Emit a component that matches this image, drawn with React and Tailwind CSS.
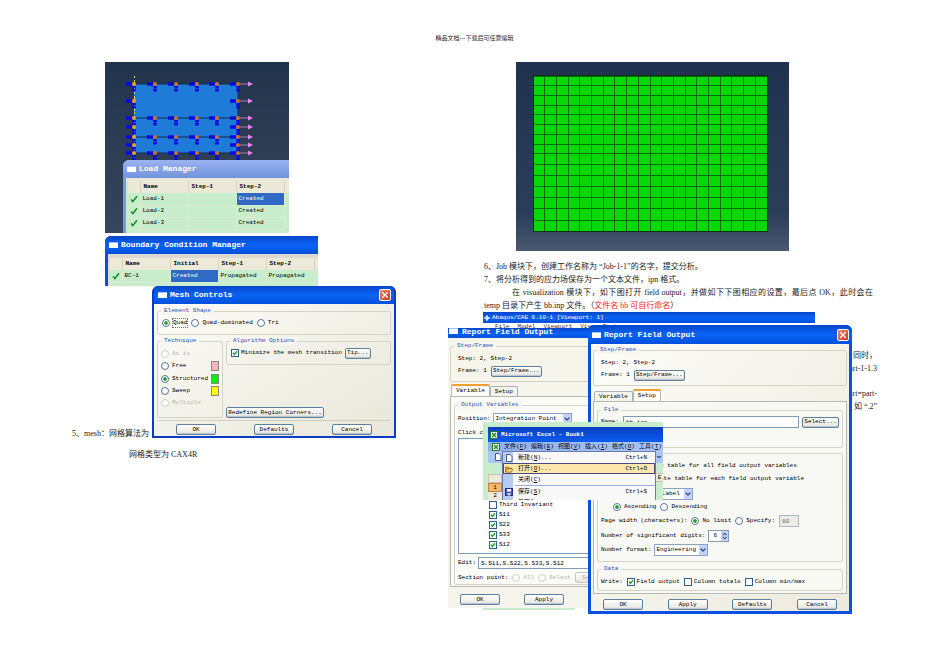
import { ChevronDown, X } from 'lucide-react';

const nodeColumns = [29, 50, 71, 92, 112, 133];
const nodeRows = [
  { y: 22, full: true },
  { y: 39, full: false },
  { y: 56, full: true },
  { y: 65, full: false },
  { y: 75, full: true },
  { y: 83, full: false },
  { y: 91, full: true },
];

const meshRows = [14, 23, 33, 43, 52, 62, 72, 82, 91, 102, 113, 124, 135, 146, 158, 169];

const XpButton = ({ children, className = 'w-10', disabled = false }) => (
  <button
    type="button"
    disabled={disabled}
    className={`h-[11px] shrink-0 whitespace-nowrap rounded-xs border border-[#5f7f9f] bg-linear-to-b from-white to-[#e6e5dc] text-center shadow-[inset_0_-1px_1px_#b9c3d2] disabled:border-[#c9c7ba] disabled:text-[#aca899] disabled:shadow-none ${className}`}
  >
    {children}
  </button>
);

const Radio = ({ label, name, checked = false, disabled = false, focused = false }) => (
  <label className={`flex items-center gap-[3px] whitespace-nowrap ${disabled ? 'text-[#b5b3a6]' : ''}`}>
    <input
      type="radio"
      name={name}
      defaultChecked={checked}
      disabled={disabled}
      className="size-2 shrink-0 appearance-none rounded-full border border-[#55779a] bg-white checked:bg-[radial-gradient(circle,#21a121_0_35%,#ffffff_45%)] disabled:border-[#d0cec2]"
    />
    <span className={focused ? 'outline outline-dotted outline-[#777777]' : ''}>{label}</span>
  </label>
);

const Check = ({ label, checked = false }) => (
  <label className="flex items-center gap-[2px] whitespace-nowrap">
    <span className="grid size-2 shrink-0">
      <input
        type="checkbox"
        defaultChecked={checked}
        className="peer col-start-1 row-start-1 size-2 appearance-none border border-[#2f5f8f] bg-white"
      />
      <svg
        viewBox="0 0 8 8"
        className="pointer-events-none col-start-1 row-start-1 hidden size-2 fill-none stroke-[#21a121] peer-checked:block"
      >
        <path d="M2 3.6 3.4 5.4 6 2.2" strokeWidth="1.4" />
      </svg>
    </span>
    {label}
  </label>
);

const Dropdown = ({ value, label, className }) => (
  <span className={`grid h-3 shrink-0 ${className}`}>
    <select
      aria-label={label}
      className="col-start-1 row-start-1 w-full appearance-none border border-[#8aa5c4] bg-white pl-px"
    >
      <option>{value}</option>
    </select>
    <span className="pointer-events-none col-start-1 row-start-1 m-px flex w-2 items-center justify-center self-stretch justify-self-end bg-[#c3d3fd]">
      <ChevronDown className="size-2 text-[#33508a]" strokeWidth={4} />
    </span>
  </span>
);

const Group = ({ title, className = '', children }) => (
  <fieldset className="relative min-w-0">
    {title && (
      <legend className="absolute -top-1 left-1 h-2 bg-[#f8f7ef] px-[3px] leading-2 text-[#1d4fc0]">
        {title}
      </legend>
    )}
    <div className={`rounded-xs border border-[#d5d3c4] ${className}`}>{children}</div>
  </fieldset>
);

const WindowIcon = () => <span className="h-[6px] w-[9px] shrink-0 border-t border-[#9fc4f5] bg-white" />;

const TitleBar = ({ title, closable = false, className }) => (
  <div className={`flex shrink-0 items-center gap-[3px] pl-1 pr-[3px] text-[8px] font-bold text-white ${className}`}>
    <WindowIcon />
    <h2 className="flex-1 whitespace-nowrap">{title}</h2>
    {closable && (
      <button
        type="button"
        aria-label="Close"
        className="flex size-3 items-center justify-center rounded-xs border border-white bg-linear-to-br from-[#f0866a] to-[#c8321a]"
      >
        <X className="size-[10px]" strokeWidth={3} />
      </button>
    )}
  </div>
);

const blueTitle = 'bg-linear-to-b from-[#0846c8] via-[#0a63f5] to-[#0450dc]';

const CheckMark = () => (
  <svg viewBox="0 0 8 8" className="mx-auto size-2 fill-none stroke-[#0f8a1e]">
    <path d="M1 4.4 2.8 6.6 7 1.2" strokeWidth="1.5" />
  </svg>
);

const ManagerTable = ({ columns, rows, selected }) => (
  <table className="w-full table-fixed border-collapse bg-[#c7edcc] text-left">
    <thead>
      <tr className="h-3 bg-[#ece9d8]">
        <th className="w-3 border-r border-[#d8d4c2]" />
        {columns.map((column) => (
          <th key={column} className="w-12 border-r border-[#d8d4c2] pl-[3px] font-bold">
            {column}
          </th>
        ))}
        <th />
      </tr>
    </thead>
    <tbody>
      {rows.map((row, r) => (
        <tr key={row[0]} className="h-3">
          <td className="border-b border-r border-[#d9ecd6]">
            <CheckMark />
          </td>
          {row.map((cell, c) => (
            <td
              key={columns[c]}
              className={`border-b border-r border-[#d9ecd6] pl-[2px] ${
                r === 0 && columns[c] === selected ? 'bg-[#316ac5] text-white' : ''
              }`}
            >
              {cell}
            </td>
          ))}
          <td />
        </tr>
      ))}
    </tbody>
  </table>
);

const ModelDrawing = () => (
  <svg viewBox="0 0 184 98" className="block h-[98px] w-full">
    <rect x="29" y="22" width="104" height="69" fill="#1f7bd8" />
    <path d="M29 22H133M29 56H133M29 75H133M29 91H133M133 22V91" stroke="#0d2c55" fill="none" />
    <path d="M29.5 14V98" stroke="#d8d860" strokeDasharray="2 2" />
    <path d="M29.5 24V98" stroke="#ffffff" strokeDasharray="1 5" />
    {nodeRows.map(({ y, full }) =>
      nodeColumns
        .filter((x) => full || x === 29 || x === 133)
        .map((x) => (
          <g key={`${x}-${y}`}>
            <path d={`M${x - 8} ${y}H${x - 2}`} stroke="#0808e0" strokeWidth="3.500" />
            <path d={`M${x} ${y + 2}V${y + 8}`} stroke="#0808e0" strokeWidth="3.500" strokeDasharray="2.500 0.5" />
            <circle cx={x} cy={y} r="2" fill={x === 29 ? '#f0a030' : '#d07030'} />
          </g>
        ))
    )}
    {nodeRows.map(({ y }) => (
      <g key={y}>
        <path d={`M135 ${y}H144`} stroke="#a878b8" />
        <path d={`M143 ${y - 2.5}L148 ${y}L143 ${y + 2.5}Z`} fill="#ee82ee" />
      </g>
    ))}
  </svg>
);

const MeshDrawing = () => (
  <svg
    viewBox="0 0 273 189"
    className="block h-[189px] w-[273px] bg-linear-to-b from-[#20324f] via-[#2c3d58] via-80% to-[#4a5970]"
  >
    <rect x="17.5" y="14" width="234" height="156" fill="#08d808" />
    {meshRows.map((y) => (
      <path key={y} d={`M17 ${y + 0.5}H252`} stroke="#056a05" />
    ))}
    {Array.from({ length: 21 }, (_, i) => (
      <path key={i} d={`M${Math.round(17.5 + i * 11.7) - 0.5} 14V170`} stroke="#056a05" />
    ))}
    <rect x="17.5" y="13.5" width="234" height="156" fill="none" stroke="#04340c" />
  </svg>
);

const LoadManager = () => (
  <figure className="w-[184px] overflow-hidden bg-linear-to-b from-[#22344c] to-[#36465c]">
    <ModelDrawing />
    <section className="ml-[18px] flex h-[73px] flex-col rounded-tl-md bg-[#7b97e0]">
      <TitleBar title="Load Manager" className="h-[18px] rounded-tl-md bg-linear-to-b from-[#9ab4f0] to-[#7392de]" />
      <div className="ml-[3px] flex-1 border-t-3 border-[#e9e7dc] bg-[#c7edcc] pl-[2px]">
        <ManagerTable
          columns={['Name', 'Step-1', 'Step-2']}
          rows={[
            ['Load-1', '', 'Created'],
            ['Load-2', '', 'Created'],
            ['Load-3', '', 'Created'],
          ]}
          selected="Step-2"
        />
      </div>
    </section>
  </figure>
);

const BoundaryManager = () => (
  <figure className="flex h-[50px] w-[213px] flex-col rounded-tl-md bg-[#0a50dc]">
    <TitleBar title="Boundary Condition Manager" className={`h-[18px] rounded-tl-md ${blueTitle}`} />
    <div className="ml-[3px] flex-1 border-l border-t-4 border-[#dcdad0] bg-[#c7edcc] pl-px">
      <ManagerTable
        columns={['Name', 'Initial', 'Step-1', 'Step-2']}
        rows={[['BC-1', 'Created', 'Propagated', 'Propagated']]}
        selected="Initial"
      />
    </div>
  </figure>
);

const techniques = [
  { label: 'As is', disabled: true },
  { label: 'Free', color: 'bg-[#ffb3c1]' },
  { label: 'Structured', color: 'bg-[#00ee10]', checked: true },
  { label: 'Sweep', color: 'bg-[#ffff00]' },
  { label: 'Multiple', disabled: true },
];

const MeshControls = () => (
  <section className="flex h-[152px] w-[244px] shrink-0 flex-col rounded-t-md border-2 border-t-0 border-[#0a3cc8] bg-linear-to-br from-[#fdfdfa] to-[#e9e7d9]">
    <TitleBar title="Mesh Controls" closable className={`h-[18px] rounded-t-sm ${blueTitle}`} />
    <div className="flex flex-1 flex-col px-[3px] pt-[7px]">
      <Group title="Element Shape" className="flex h-6 items-center gap-1 px-1">
        <Radio name="shape" label="Quad" checked focused />
        <Radio name="shape" label="Quad-dominated" />
        <Radio name="shape" label="Tri" />
      </Group>
      <div className="mt-[6px] flex items-start gap-[3px]">
        <Group title="Technique" className="flex h-[77px] w-[66px] flex-col justify-between px-[3px] pb-[9px] pt-[7px]">
          {techniques.map((t) => (
            <div key={t.label} className="flex h-[10px] items-center justify-between">
              <Radio name="technique" label={t.label} checked={t.checked} disabled={t.disabled} />
              {t.color && <span className={`h-[10px] w-2 shrink-0 border border-[#8a8a80] ${t.color}`} />}
            </div>
          ))}
        </Group>
        <div className="flex h-[77px] flex-1 flex-col justify-between">
          <Group title="Algorithm Options" className="flex h-6 items-center gap-[3px] px-1">
            <Check label="Minimize the mesh transition" checked />
            <XpButton className="w-[26px]">Tip...</XpButton>
          </Group>
          <XpButton className="w-[98px]">Redefine Region Corners...</XpButton>
        </div>
      </div>
      <div className="mt-[2px] flex justify-around border-t border-[#cfcdbf] pt-[3px]">
        <XpButton>OK</XpButton>
        <XpButton>Defaults</XpButton>
        <XpButton>Cancel</XpButton>
      </div>
    </div>
  </section>
);

const StepFrame = () => (
  <Group title="Step/Frame" className="flex h-9 flex-col justify-center gap-[3px] px-[7px] pt-[3px]">
    <p className="leading-2">Step: 2, Step-2</p>
    <div className="flex items-center gap-1">
      <span className="whitespace-pre">Frame: 1</span>
      <XpButton className="w-[51px]">Step/Frame...</XpButton>
    </div>
  </Group>
);

const Tabs = ({ active }) => (
  <div role="tablist" className="flex items-end pl-px">
    {['Variable', 'Setup'].map((tab) => (
      <button
        key={tab}
        type="button"
        role="tab"
        aria-selected={tab === active}
        className={`rounded-t-xs border border-b-0 px-1 ${
          tab === active ? 'h-3 border-[#b5b8b5] border-t-2 border-t-[#f0a030] bg-[#fcfcf8]' : 'h-[10px] border-[#a8b4b8] bg-[#f4f3ea]'
        }`}
      >
        {tab}
      </button>
    ))}
  </div>
);

const VariableDialog = () => (
  <section className="absolute -left-9 top-4 flex h-[280px] w-[142px] flex-col overflow-hidden bg-[#f6f5ec]">
    <div className={`flex h-[10px] shrink-0 items-start gap-1 pl-px text-[8px] font-bold leading-2 text-white ${blueTitle}`}>
      <WindowIcon />
      <h2 className="whitespace-nowrap">Report Field Output</h2>
    </div>
    <div className="mt-2 w-[250px] pl-[2px]">
      <StepFrame />
      <div className="mt-[2px]">
        <Tabs active="Variable" />
      </div>
      <div className="h-[191px] border border-[#b5b8b5] bg-[#fbfbf7] pl-[3px] pt-2">
        <Group title="Output Variables" className="h-[180px] pl-[3px] pt-[7px]">
          <div className="flex items-center gap-[3px]">
            <span>Position:</span>
            <Dropdown label="Position" value="Integration Point" className="w-[79px]" />
          </div>
          <p className="mt-1 leading-2">Click checkboxes or edit the identifiers</p>
          <div className="mt-px flex h-[116px] flex-col justify-end gap-[2px] border border-[#7f9db9] bg-white pb-1 pl-[30px]">
            <Check label="Third Invariant" />
            <Check label="S11" checked />
            <Check label="S22" checked />
            <Check label="S33" checked />
            <Check label="S12" checked />
          </div>
          <label className="mt-[3px] flex items-center gap-[2px]">
            Edit:
            <input
              className="h-3 flex-1 border border-[#7f9db9] bg-white pl-[2px]"
              defaultValue="S.S11,S.S22,S.S33,S.S12"
            />
          </label>
          <div className="mt-[3px] flex items-center gap-1">
            <span>Section point:</span>
            <Radio name="section" label="All" disabled />
            <Radio name="section" label="Select" disabled />
            <XpButton className="w-9" disabled>
              Set...
            </XpButton>
          </div>
        </Group>
      </div>
      <div className="mt-[7px] flex gap-6 pl-[10px]">
        <XpButton>OK</XpButton>
        <XpButton>Apply</XpButton>
      </div>
    </div>
  </section>
);

const SetupDialog = () => (
  <section className="absolute left-[104px] top-[13px] flex h-[289px] w-[264px] flex-col rounded-t-md border-3 border-t-0 border-[#0a50e0] bg-linear-to-br from-[#fdfdfa] to-[#eceadd]">
    <TitleBar title="Report Field Output" closable className={`-mx-[3px] h-[19px] rounded-t-md ${blueTitle}`} />
    <div className="flex flex-col px-[2px] pt-[6px]">
      <StepFrame />
      <div className="mt-[3px]">
        <Tabs active="Setup" />
      </div>
      <div className="h-[193px] border border-[#b5b8b5] bg-[#f8f8f4] px-[3px] pt-2">
        <Group title="File" className="h-[38px] px-[3px] pt-[5px]">
          <div className="flex items-center gap-[3px]">
            <label className="flex flex-1 items-center gap-1">
              Name:
              <input className="h-3 min-w-0 flex-1 border border-[#7f9db9] bg-white pl-[2px]" defaultValue="bb.inp" />
            </label>
            <XpButton className="w-[37px]">Select...</XpButton>
          </div>
        </Group>
        <div className="mt-[5px]">
          <Group className="flex h-[109px] flex-col px-[3px] pt-2">
            <div className="flex flex-col gap-[5px] pl-[30px]">
              <Radio name="layout" label="Single table for all field output variables" />
              <Radio name="layout" label="Separate table for each field output variable" checked />
            </div>
            <div className="mt-[5px] flex items-center gap-1">
              <span>Sort by:</span>
              <Dropdown label="Sort by" value="Node Label" className="ml-2 w-[51px]" />
            </div>
            <div className="mt-[3px] flex gap-1 pl-3">
              <Radio name="sort" label="Ascending" checked />
              <Radio name="sort" label="Descending" />
            </div>
            <div className="mt-1 flex items-center gap-1">
              <span>Page width (characters):</span>
              <Radio name="width" label="No limit" checked />
              <Radio name="width" label="Specify:" />
              <input
                aria-label="Characters"
                className="h-3 w-5 border border-[#a9b8c4] bg-[#ecebe4] pl-[2px] text-[#666666]"
                defaultValue="80"
              />
            </div>
            <label className="mt-[3px] flex items-center gap-[3px]">
              Number of significant digits:
              <span className="flex h-3 w-[21px] items-center border border-[#7f9db9] bg-white pl-1">
                <input className="w-2 min-w-0 bg-transparent" defaultValue="6" />
                <svg viewBox="0 0 8 10" className="h-[10px] w-2 bg-[#c3d3fd]">
                  <path d="M2 4 4 2 6 4M2 6 4 8 6 6" fill="none" stroke="#33508a" strokeWidth="1.2" />
                </svg>
              </span>
            </label>
            <div className="mt-[2px] flex items-center gap-[3px]">
              <span>Number format:</span>
              <Dropdown label="Number format" value="Engineering" className="w-[54px]" />
            </div>
          </Group>
        </div>
        <div className="mt-[7px]">
          <Group title="Data" className="flex h-[22px] items-center gap-1 px-[3px] pt-1">
            <span>Write:</span>
            <Check label="Field output" checked />
            <Check label="Column totals" />
            <Check label="Column min/max" />
          </Group>
        </div>
      </div>
      <div className="mt-[5px] flex justify-between px-[10px]">
        <XpButton>OK</XpButton>
        <XpButton>Apply</XpButton>
        <XpButton>Defaults</XpButton>
        <XpButton>Cancel</XpButton>
      </div>
    </div>
  </section>
);

const NewIcon = () => (
  <svg viewBox="0 0 8 8" className="size-2 shrink-0">
    <path d="M1.5.5H5L7 2.500V7.500H1.500Z" fill="#ffffff" stroke="#4a5a8a" />
  </svg>
);

const OpenIcon = () => (
  <svg viewBox="0 0 8 8" className="size-2 shrink-0">
    <path d="M.5 7V2H3L4 3H6.500V7Z" fill="#e0a030" stroke="#8a5a10" strokeWidth=".6" />
    <path d="M.5 7 2 4H8L6.500 7Z" fill="#ffdc80" stroke="#8a5a10" strokeWidth=".6" />
  </svg>
);

const SaveIcon = () => (
  <svg viewBox="0 0 8 8" className="size-2 shrink-0">
    <rect x=".5" y=".5" width="7" height="7" fill="#4a5ab8" stroke="#26327a" />
    <rect x="2" y="1" width="4" height="2.500" fill="#ffffff" />
    <rect x="2.500" y="5" width="3" height="2.500" fill="#d0d4ee" />
  </svg>
);

const ExcelIcon = () => (
  <svg viewBox="0 0 8 8" className="size-2 shrink-0">
    <rect x=".5" y=".5" width="7" height="7" fill="#f4fff4" stroke="#2a7a2a" />
    <path d="M2 2 6 6M6 2 2 6" stroke="#1d8a2d" strokeWidth="1.4" />
  </svg>
);

const excelMenus = [
  ['文件', 'F'],
  ['编辑', 'E'],
  ['视图', 'V'],
  ['插入', 'I'],
  ['格式', 'O'],
  ['工具', 'T'],
];

const MenuItem = ({ icon, label, accel, dots, shortcut, active }) => (
  <button
    type="button"
    className={`flex h-[11px] w-full shrink-0 items-center border pl-px pr-[7px] text-left ${
      active ? 'border-[#4a4a80] bg-[#ffe8ae]' : 'border-transparent'
    }`}
  >
    <span className="w-[13px]">{icon}</span>
    <span className="flex-1">
      {label}(<u>{accel}</u>){dots && '...'}
    </span>
    <span>{shortcut}</span>
  </button>
);

const ExcelWindow = () => (
  <section className="absolute -left-px top-[110px] flex h-[78px] w-[180px] flex-col overflow-hidden bg-[#c7edcc] pl-[5px] pt-[5px]">
    <div className="flex h-[15px] shrink-0 items-center gap-[3px] bg-linear-to-b from-[#0a3fc0] to-[#0a5cf0] pl-[2px] font-bold text-white">
      <ExcelIcon />
      <h2>Microsoft Excel - Book1</h2>
    </div>
    <nav className="flex h-[9px] shrink-0 items-center gap-1 whitespace-nowrap bg-linear-to-r from-[#8fb0ea] to-[#a9c6f5] pl-1">
      <ExcelIcon />
      {excelMenus.map(([label, accel]) => (
        <button key={label} type="button" className="w-[23px] shrink-0 text-left">
          {label}(<u>{accel}</u>)
        </button>
      ))}
    </nav>
    <div className="flex flex-1">
      <div className="flex w-[14px] shrink-0 flex-col">
        <div className="flex h-3 items-center justify-end bg-[#a9c6f5]">
          <NewIcon />
        </div>
        <div className="h-[11px]" />
        <div className="h-[9px] border border-[#c8c4b4] bg-[#ece9d8]" />
        <div className="h-[9px] border border-[#c08040] bg-[#f5b868] text-center leading-2">1</div>
        <div className="h-2 bg-[#ece9d8] text-center leading-2">2</div>
      </div>
      <div className="flex h-[60px] w-[154px] shrink-0 flex-col border border-[#6a7ab0] bg-linear-to-r from-[#b4cbf2] from-[10px] to-[#f8f8f8] to-[10px]">
        <MenuItem icon={<NewIcon />} label="新建" accel="N" dots shortcut="Ctrl+N" />
        <MenuItem icon={<OpenIcon />} label="打开" accel="O" dots shortcut="Ctrl+O" active />
        <MenuItem label="关闭" accel="C" />
        <div className="ml-3 border-t border-[#9aaedc]" />
        <MenuItem icon={<SaveIcon />} label="保存" accel="S" shortcut="Ctrl+S" />
        <MenuItem label="另存为" accel="A" dots />
      </div>
      <div className="flex flex-1 flex-col text-center">
        <div className="flex h-3 items-center bg-[#a9c6f5]">
          <ChevronDown className="size-[6px]" strokeWidth={4} />
        </div>
        <div className="mt-[10px] h-[9px] border-y border-[#c8c4b4] bg-[#ece9d8] leading-2">E</div>
      </div>
    </div>
  </section>
);

const AbaqusWindow = () => (
  <section className="absolute -left-px top-0 w-[332px] bg-white">
    <div className={`flex h-[11px] items-center gap-[2px] pl-px text-white ${blueTitle}`}>
      <svg viewBox="0 0 8 8" className="size-[6px]">
        <path d="M4 0V8M0 4H8" stroke="#ffffff" strokeWidth="1.4" />
        <circle cx="4" cy="4" r="2" fill="none" stroke="#ffffff" />
      </svg>
      <h2>Abaqus/CAE 6.10-1 [Viewport: 1]</h2>
    </div>
    <nav className="flex h-[6px] gap-2 overflow-hidden pl-3 text-[#333333]">
      <span>File</span>
      <span>Model</span>
      <span>Viewport</span>
      <span>View</span>
      <span>Part</span>
    </nav>
  </section>
);

const App = () => {
  return (
    <div className="min-h-screen overflow-x-hidden bg-white pb-12 pl-[72px] pr-[73px] pt-[34px] font-['Liberation_Serif','Noto_Sans_CJK_SC',serif] text-[8px] leading-[13px] text-[#222222]">
      <header className="text-center text-[6px] leading-2">精品文档---下载后可任意编辑</header>

      <main className="mt-5 grid grid-cols-2 gap-[19px]">
        {/* Left page */}
        <div>
          <div className="ml-[33px] flex flex-col gap-[3px] font-['Liberation_Mono','Noto_Sans_CJK_SC',monospace] text-[6px] leading-2 text-black">
            <LoadManager />
            <BoundaryManager />
          </div>
          <div className="flex items-end">
            <p className="w-20 shrink-0 whitespace-nowrap leading-2">5、mesh：网格算法为</p>
            <div className="font-['Liberation_Mono','Noto_Sans_CJK_SC',monospace] text-[6px] leading-2 text-black">
              <MeshControls />
            </div>
          </div>
          <p className="mt-[10px] pl-[57px]">网格类型为 CAX4R</p>
        </div>

        {/* Right page */}
        <div>
          <figure className="pl-8">
            <MeshDrawing />
          </figure>
          <div className="mt-[9px] pr-1 text-justify">
            <p>6、Job 模块下，创建工作名称为 “Job-1-1”的名字，提交分析。</p>
            <p>7、将分析得到的应力场保存为一个文本文件，ipn 格式。</p>
            <p className="indent-7">
              在 visualization 模块下，如下图打开 field output，并做如下下图相应的设置，最后点 OK，此时会在{' '}
              <span className="whitespace-nowrap">temp 目录下产生</span> bb.inp 文件。（
              <span className="text-[#ff2020]">文件名 bb 可自行命名</span>）
            </p>
          </div>
          <div className="relative h-[302px] pt-[37px] text-right">
            <p>同时，</p>
            <p>part-1-1.3</p>
            <p className="mt-3">part=part-</p>
            <p>如 “.2”</p>
            <div className="text-left font-['Liberation_Mono','Noto_Sans_CJK_SC',monospace] text-[6px] leading-2 text-black">
              <div className="absolute -left-px bottom-1 h-2 w-[92px] bg-[#c7edcc]" />
              <AbaqusWindow />
              <VariableDialog />
              <SetupDialog />
              <ExcelWindow />
            </div>
          </div>
        </div>
      </main>
    </div>
  );
};

export default App;
